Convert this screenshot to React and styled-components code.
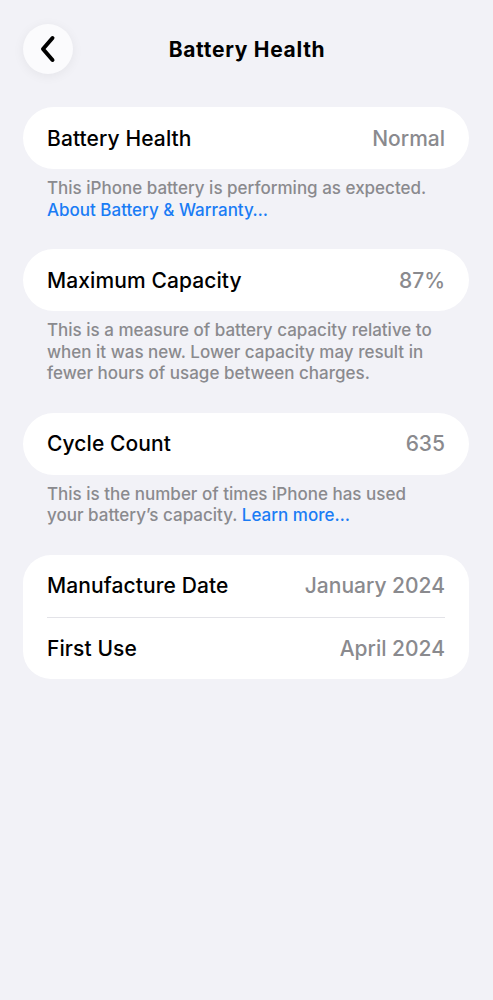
import React from 'react';
import styled, { createGlobalStyle } from 'styled-components';

const GlobalStyle = createGlobalStyle`
  html, body {
    margin: 0;
    padding: 0;
    background: #f2f2f7;
  }
  body {
    font-family: Inter, "Noto Sans", "Liberation Sans", sans-serif;
    -webkit-font-smoothing: antialiased;
  }
`;

const Page = styled.div`
  min-height: 1000px;
  background: #f2f2f7;
  padding: 24px 24px 0 23px;
  box-sizing: border-box;
`;

const Header = styled.div`
  position: relative;
  height: 50px;
  display: flex;
  align-items: center;
  justify-content: center;
  margin-bottom: 33px;
`;

const BackButton = styled.button`
  position: absolute;
  left: 0;
  top: 0;
  width: 50px;
  height: 50px;
  border-radius: 50%;
  border: none;
  background: #fbfbfd;
  box-shadow: 0 2px 12px rgba(0, 0, 0, 0.06);
  display: flex;
  align-items: center;
  justify-content: center;
  padding: 0;
`;

const Title = styled.h1`
  margin: 0 0 0 2px;
  font-size: 21px;
  font-weight: 700;
  color: #000;
  letter-spacing: 0.7px;
`;

const Card = styled.div`
  background: #fff;
  border-radius: ${({ $multi }) => ($multi ? '28px' : '31px')};
  padding: 0 24px;
`;

const Row = styled.div`
  height: 62px;
  display: flex;
  align-items: center;
  justify-content: space-between;
  border-top: ${({ $divider }) => ($divider ? '1px solid #e3e3e8' : 'none')};
  box-sizing: border-box;
`;

const Label = styled.span`
  font-size: 21px;
  font-weight: 500;
  color: #000;
  letter-spacing: 0.1px;
`;

const Value = styled.span`
  font-size: 21px;
  font-weight: 500;
  color: #8a8a8e;
  letter-spacing: 0px;
`;

const Footer = styled.p`
  margin: 0 0 28px;
  padding: 9px 24px 0;
  font-size: 17px;
  line-height: 21.5px;
  font-weight: 500;
  color: #8a8a8e;
  letter-spacing: 0px;
`;

const Link = styled.a`
  color: #1a7cf5;
  text-decoration: none;
`;

const ChevronLeft = () => (
  <svg width="16" height="28" viewBox="0 0 16 28" fill="none">
    <path
      d="M12.5 3 L3 14 L12.5 25"
      stroke="#000"
      strokeWidth="4"
      strokeLinecap="round"
      strokeLinejoin="round"
    />
  </svg>
);

export default function App() {
  return (
    <>
      <GlobalStyle />
      <Page>
        <Header>
          <BackButton aria-label="Back">
            <ChevronLeft />
          </BackButton>
          <Title>Battery Health</Title>
        </Header>

        <Card>
          <Row>
            <Label>Battery Health</Label>
            <Value>Normal</Value>
          </Row>
        </Card>
        <Footer>
          This iPhone battery is performing as expected.
          <br />
          <Link href="#">About Battery &amp; Warranty…</Link>
        </Footer>

        <Card>
          <Row>
            <Label>Maximum Capacity</Label>
            <Value>87%</Value>
          </Row>
        </Card>
        <Footer>
          This is a measure of battery capacity relative to when it was new. Lower capacity may result in fewer hours of usage between charges.
        </Footer>

        <Card>
          <Row>
            <Label>Cycle Count</Label>
            <Value>635</Value>
          </Row>
        </Card>
        <Footer>
          This is the number of times iPhone has used your battery’s capacity. <Link href="#">Learn more…</Link>
        </Footer>

        <Card $multi>
          <Row>
            <Label>Manufacture Date</Label>
            <Value>January 2024</Value>
          </Row>
          <Row $divider>
            <Label>First Use</Label>
            <Value>April 2024</Value>
          </Row>
        </Card>
      </Page>
    </>
  );
}
